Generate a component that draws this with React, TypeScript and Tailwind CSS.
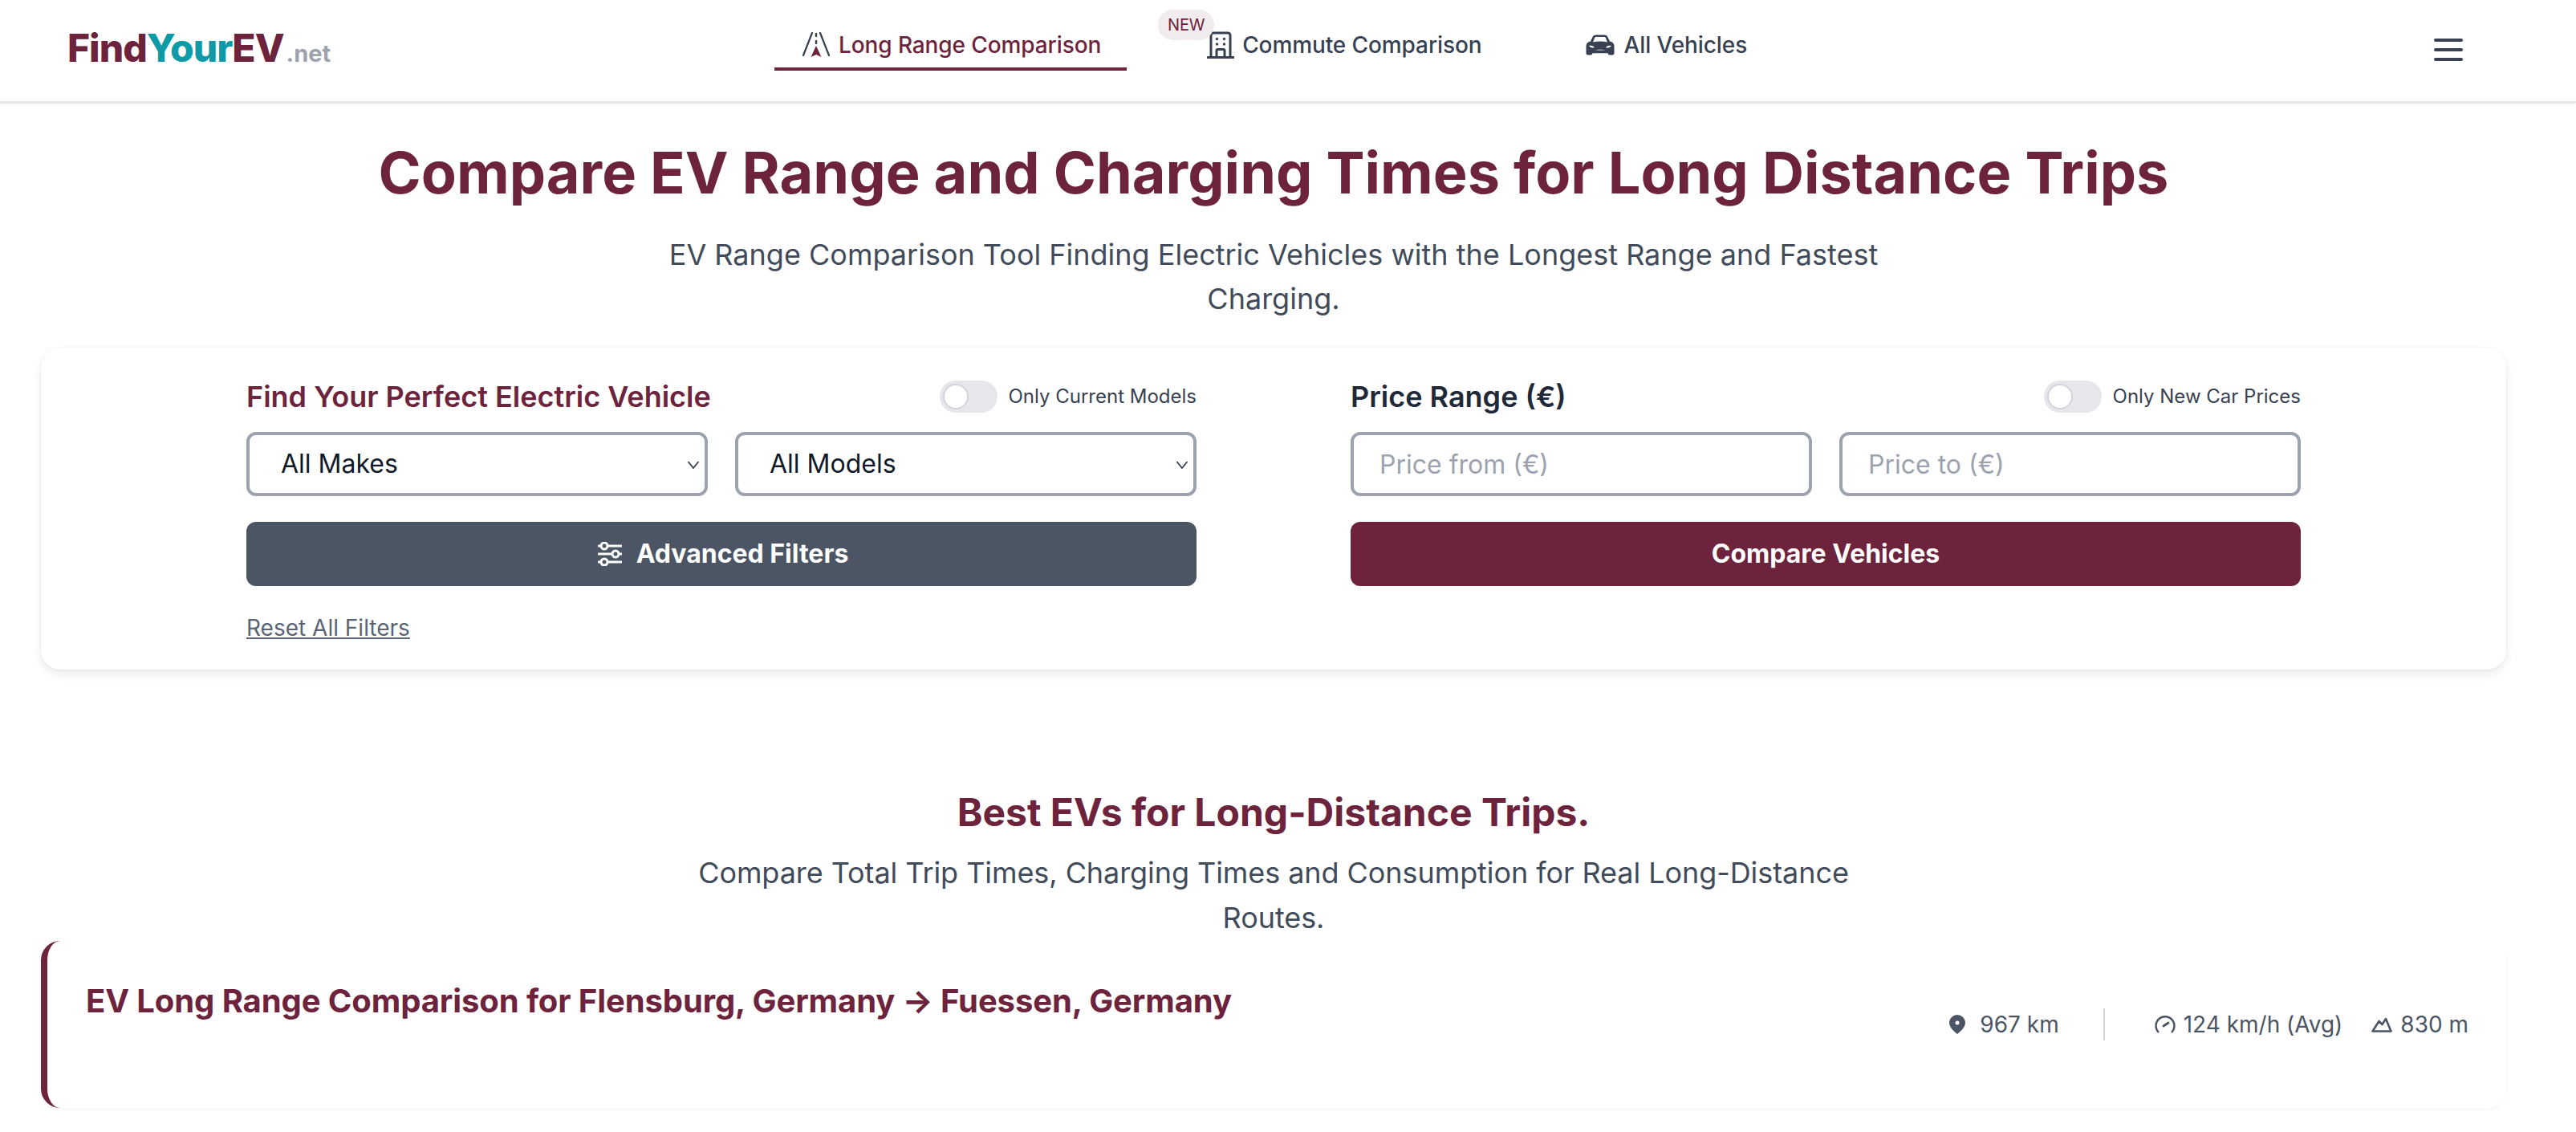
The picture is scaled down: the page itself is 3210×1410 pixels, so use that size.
import React from "react";

const RoadIcon = () => (
  <svg width="36" height="32" viewBox="0 0 36 32" fill="none" className="shrink-0">
    <path d="M13 1 2 29M23 1l11 28" stroke="#374151" strokeWidth="2.2" strokeLinecap="round" />
    <path d="M18 1v5M18 10v5" stroke="#374151" strokeWidth="2.4" />
    <path d="M18 17l6.5 14L18 28l-6.5 3z" fill="#6d233c" />
  </svg>
);

const BuildingIcon = () => (
  <svg width="34" height="34" viewBox="0 0 34 34" fill="none" className="shrink-0">
    <path d="M5 32V5a3 3 0 0 1 3-3h18a3 3 0 0 1 3 3v27" stroke="#374151" strokeWidth="3" />
    <path d="M1 32.5h32" stroke="#374151" strokeWidth="3" strokeLinecap="round" />
    <path d="M12 32v-8a1.5 1.5 0 0 1 1.5-1.5h7A1.5 1.5 0 0 1 22 24v8" stroke="#374151" strokeWidth="3" />
    <circle cx="12.5" cy="9.5" r="1.7" fill="#374151" />
    <circle cx="21.5" cy="9.5" r="1.7" fill="#374151" />
    <circle cx="12.5" cy="16" r="1.7" fill="#374151" />
    <circle cx="21.5" cy="16" r="1.7" fill="#374151" />
  </svg>
);

const CarIcon = () => (
  <svg width="36" height="26" viewBox="0 0 36 26" className="shrink-0">
    <path
      fillRule="evenodd"
      fill="#374151"
      d="M6 8.500 8.600 3C9.600 1 11 .4 13 .4h10c2 0 3.400.6 4.400 2.600L30 8.500c3.400.8 5.500 2.800 5.500 6V23a2.500 2.500 0 0 1-2.500 2.500h-3a2.500 2.500 0 0 1-2.500-2.300H8.500a2.500 2.500 0 0 1-2.500 2.300H3A2.500 2.500 0 0 1 .5 23v-8.500c0-3.200 2.100-5.200 5.500-6ZM9 9.500c5.500-1.200 12.500-1.200 18 0l-2-5c-.4-.9-1.100-1.400-2.200-1.400H13.200c-1.100 0-1.800.5-2.200 1.400ZM4 14c1.500 2 4 2.800 7 2.500-.8-2-3.500-3.300-7-2.500Zm28 0c-3.500-.8-6.200.5-7 2.500 3 .3 5.500-.5 7-2.500ZM11.500 20c3-1.800 10-1.800 13 0-3.500-.6-9.500-.6-13 0Z"
    />
  </svg>
);

const SlidersIcon = () => (
  <svg width="30" height="30" viewBox="0 0 30 30" fill="none" className="shrink-0">
    <path d="M1 5h28M1 15h28M1 25h28" stroke="#fff" strokeWidth="3" strokeLinecap="round" />
    <circle cx="8" cy="5" r="4" fill="#4b5563" stroke="#fff" strokeWidth="3" />
    <circle cx="22" cy="15" r="4" fill="#4b5563" stroke="#fff" strokeWidth="3" />
    <circle cx="8" cy="25" r="4" fill="#4b5563" stroke="#fff" strokeWidth="3" />
  </svg>
);

const PinIcon = () => (
  <svg width="20" height="24" viewBox="0 0 20 24" className="shrink-0">
    <path
      fillRule="evenodd"
      fill="#4b5563"
      d="M10 0a10 10 0 0 1 10 10c0 5-5 10-10 14C5 20 0 15 0 10A10 10 0 0 1 10 0Zm0 7.500a2.500 2.500 0 1 0 0 5 2.500 2.500 0 0 0 0-5Z"
    />
  </svg>
);

const GaugeIcon = () => (
  <svg width="26" height="24" viewBox="0 0 26 24" fill="none" className="shrink-0">
    <path d="M5 22A11.500 11.500 0 1 1 21 22" stroke="#4b5563" strokeWidth="2.400" />
    <path d="M11 14l6-4" stroke="#4b5563" strokeWidth="2.800" strokeLinecap="round" />
  </svg>
);

const MountainIcon = () => (
  <svg width="26" height="20" viewBox="0 0 26 20" fill="none" className="shrink-0">
    <path d="M1.500 18.500h23L18 3l-4.500 7L9.500 6z" stroke="#4b5563" strokeWidth="2.600" strokeLinejoin="round" />
  </svg>
);

const Chevron = () => (
  <svg
    width="16"
    height="10"
    viewBox="0 0 16 10"
    fill="none"
    className="pointer-events-none absolute right-[10px] top-[36px]"
  >
    <path d="M1.500 1l6.500 8 6.500-8" stroke="#374151" strokeWidth="1.800" />
  </svg>
);

const Toggle = ({ label }: { label: string }) => (
  <div className="flex items-center gap-[14px]">
    <span className="relative block h-[40px] w-[72px] rounded-full bg-[#e5e7eb]">
      <span className="absolute left-[4px] top-[4px] h-[32px] w-[32px] rounded-full border-2 border-[#d1d5db] bg-white" />
    </span>
    <span className="text-[24px] leading-[32px] text-[#374151]">{label}</span>
  </div>
);

const fieldClass =
  "h-[80px] w-full rounded-[12px] border-4 border-[#9ca3af] bg-white text-[32px] text-[#111827] outline-none";

const SelectField = ({ label }: { label: string }) => (
  <div className="relative">
    <select className={fieldClass + " appearance-none pl-[39px] pr-[4px]"}>
      <option>{label}</option>
    </select>
    <Chevron />
  </div>
);

export default function App() {
  return (
    <div className="h-[1410px] w-[3210px] overflow-hidden bg-white font-['Inter',sans-serif]">
      <header className="flex h-[128px] items-start border-b-2 border-[#e5e7eb] bg-white pl-[84px] pr-[141px] shadow-sm">
        <a className="flex w-[881px] items-baseline pt-[30px] text-[48px] font-extrabold leading-[60px] tracking-[-1px]">
          <span className="text-[#6d233c]">Find</span>
          <span className="text-[#0e9aa7]">Your</span>
          <span className="text-[#6d233c]">EV</span>
          <span className="ml-[3px] text-[29px] font-bold tracking-normal text-[#9ca3af]">.net</span>
        </a>
        <nav className="flex items-start pt-[36px] text-[28px] font-medium leading-[40px] tracking-[-0.100px]">
          <a className="flex items-center gap-[10px] border-b-4 border-[#6d233c] pb-[8px] pl-[34px] pr-[32px] text-[#6d233c]">
            <RoadIcon />
            Long Range Comparison
          </a>
          <a className="relative ml-[66px] flex items-center gap-[10px] px-[34px] pb-[8px] text-[#374151]">
            <span className="absolute left-[-27px] top-[-24px] flex h-[38px] w-[70px] items-center justify-center rounded-full bg-[#f1ebed] text-[20px] font-normal text-[#6d233c]">
              NEW
            </span>
            <BuildingIcon />
            Commute Comparison
          </a>
          <a className="ml-[62px] flex items-center gap-[11px] px-[34px] pb-[8px] text-[#374151]">
            <CarIcon />
            All Vehicles
          </a>
        </nav>
        <button className="ml-auto mt-[48px] flex h-[28px] w-[36px] flex-col justify-between">
          <span className="block h-[4px] w-[36px] rounded-full bg-[#374151]" />
          <span className="block h-[4px] w-[36px] rounded-full bg-[#374151]" />
          <span className="block h-[4px] w-[36px] rounded-full bg-[#374151]" />
        </button>
      </header>

      <main className="w-[3174px] px-[51px]">
        <h1 className="mt-[47px] text-center text-[72px] font-bold leading-[80px] text-[#6d233c]">
          Compare EV Range and Charging Times for Long Distance Trips
        </h1>
        <p className="mx-auto mt-[35px] max-w-[1536px] text-center text-[36px] leading-[55px] text-[#414b5a]">
          EV Range Comparison Tool Finding Electric Vehicles with the Longest Range and Fastest Charging.
        </p>

        <section className="mt-[33px] h-[401px] rounded-[24px] bg-white pt-[41px] shadow-[0_6px_14px_-2px_rgba(0,0,0,0.1),0_0_3px_rgba(0,0,0,0.06)]">
          <div className="mx-auto grid w-[2560px] grid-cols-2 gap-x-[192px]">
            <div>
              <div className="flex h-[40px] items-center justify-between">
                <h2 className="text-[36px] font-semibold leading-[40px] text-[#6d233c]">
                  Find Your Perfect Electric Vehicle
                </h2>
                <Toggle label="Only Current Models" />
              </div>
              <div className="mt-[24px] grid grid-cols-2 gap-[34px]">
                <SelectField label="All Makes" />
                <SelectField label="All Models" />
              </div>
              <button className="mt-[32px] flex h-[80px] w-full items-center justify-center gap-[18px] rounded-[12px] bg-[#4b5563] pl-[4px] text-[32px] font-bold text-white">
                <SlidersIcon />
                Advanced Filters
              </button>
              <a className="mt-[34px] block text-[28px] leading-[36px] text-[#5b6472] underline">
                Reset All Filters
              </a>
            </div>
            <div>
              <div className="flex h-[40px] items-center justify-between">
                <h2 className="text-[36px] font-semibold leading-[40px] text-[#1f2937]">Price Range (€)</h2>
                <Toggle label="Only New Car Prices" />
              </div>
              <div className="mt-[24px] grid grid-cols-2 gap-[34px]">
                <input
                  readOnly
                  placeholder="Price from (€)"
                  className={fieldClass + " px-[32px] placeholder:text-[#9ca3af]"}
                />
                <input
                  readOnly
                  placeholder="Price to (€)"
                  className={fieldClass + " px-[32px] placeholder:text-[#9ca3af]"}
                />
              </div>
              <button className="mt-[32px] flex h-[80px] w-full items-center justify-center rounded-[12px] bg-[#6d233c] text-[32px] font-bold text-white">
                Compare Vehicles
              </button>
            </div>
          </div>
        </section>

        <h2 className="mt-[150px] text-center text-[48px] font-bold leading-[56px] text-[#6d233c]">
          Best EVs for Long-Distance Trips.
        </h2>
        <p className="mx-auto mt-[19px] max-w-[1536px] text-center text-[36px] leading-[56px] tracking-[-0.070px] text-[#414b5a]">
          Compare Total Trip Times, Charging Times and Consumption for Real Long-Distance Routes.
        </p>

        <section className="mt-[1px] flex h-[208px] items-center justify-between rounded-[24px] border-l-8 border-[#6d233c] bg-white pl-[48px] pr-[47px] shadow-[0_2px_5px_rgba(0,0,0,0.04)]">
          <h3 className="mb-[58px] text-[40px] font-bold leading-[56px] tracking-[-0.100px] text-[#6d233c]">
            EV Long Range Comparison for Flensburg, Germany → Fuessen, Germany
          </h3>
          <div className="flex items-center text-[28px] leading-[36px] text-[#4b5563]">
            <PinIcon />
            <span className="ml-[18px]">967 km</span>
            <span className="ml-[55px] h-[40px] w-[2px] bg-[#d1d5db]" />
            <span className="ml-[62px]">
              <GaugeIcon />
            </span>
            <span className="ml-[10px]">124 km/h (Avg)</span>
            <span className="ml-[36px]">
              <MountainIcon />
            </span>
            <span className="ml-[10px]">830 m</span>
          </div>
        </section>
      </main>
    </div>
  );
}
